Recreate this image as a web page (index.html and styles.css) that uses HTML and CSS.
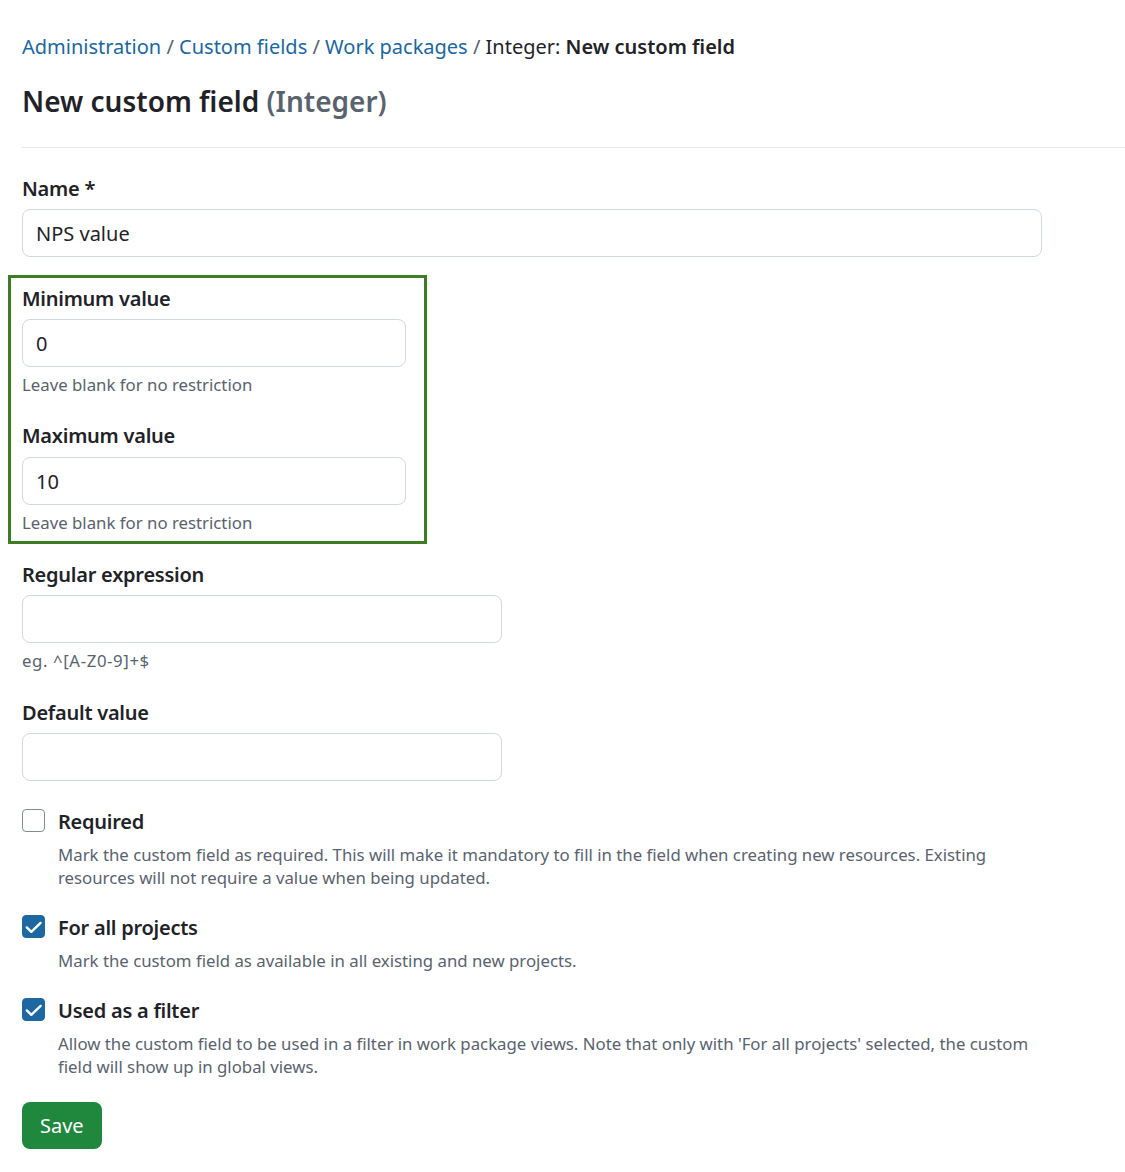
FILE: index.html
```html
<!DOCTYPE html>
<html lang="en">
<head>
<meta charset="utf-8">
<title>New custom field</title>
<link rel="stylesheet" href="styles.css">
</head>
<body>
<nav class="breadcrumb">
  <a class="crumb-link" href="#">Administration</a> <span class="sep">/</span> <a class="crumb-link" href="#">Custom fields</a> <span class="sep">/</span> <a class="crumb-link" href="#">Work packages</a> <span class="sep">/</span> <span class="current">Integer: <strong class="current-strong">New custom field</strong></span>
</nav>
<h1 class="title">New custom field <span class="title-type">(Integer)</span></h1>
<hr class="divider">
<form class="form">
  <div class="field">
    <label class="label">Name *</label>
    <input class="input" type="text" value="NPS value">
  </div>

  <div class="highlight">
    <div class="field">
      <label class="label">Minimum value</label>
      <input class="input" type="text" value="0">
      <div class="hint">Leave blank for no restriction</div>
    </div>
    <div class="field field-spaced">
      <label class="label label-loose">Maximum value</label>
      <input class="input" type="text" value="10">
      <div class="hint">Leave blank for no restriction</div>
    </div>
  </div>

  <div class="field field-after-box">
    <label class="label">Regular expression</label>
    <input class="input input-medium" type="text" value="">
    <div class="hint hint-code">eg. ^[A-Z0-9]+$</div>
  </div>

  <div class="field field-spaced-lg">
    <label class="label">Default value</label>
    <input class="input input-medium" type="text" value="">
  </div>

  <div class="check-group check-first">
    <div class="check-row">
      <span class="checkbox"></span>
      <span class="check-label">Required</span>
    </div>
    <div class="check-desc">Mark the custom field as required. This will make it mandatory to fill in the field when creating new resources. Existing resources will not require a value when being updated.</div>
  </div>

  <div class="check-group">
    <div class="check-row">
      <span class="checkbox checked"><svg class="check-icon" viewBox="0 0 23 23" width="23" height="23"><path d="M4.8 12.4L9.3 16.8L18.6 7.9" fill="none" stroke="#ffffff" stroke-width="2.4" stroke-linecap="round" stroke-linejoin="round"/></svg></span>
      <span class="check-label">For all projects</span>
    </div>
    <div class="check-desc">Mark the custom field as available in all existing and new projects.</div>
  </div>

  <div class="check-group">
    <div class="check-row">
      <span class="checkbox checked"><svg class="check-icon" viewBox="0 0 23 23" width="23" height="23"><path d="M4.8 12.4L9.3 16.8L18.6 7.9" fill="none" stroke="#ffffff" stroke-width="2.4" stroke-linecap="round" stroke-linejoin="round"/></svg></span>
      <span class="check-label">Used as a filter</span>
    </div>
    <div class="check-desc">Allow the custom field to be used in a filter in work package views. Note that only with 'For all projects' selected, the custom field will show up in global views.</div>
  </div>

  <button class="save" type="button">Save</button>
</form>
</body>
</html>
```

FILE: styles.css
```css
* {
  box-sizing: border-box;
}

html, body {
  background: #ffffff;
}

body {
  margin: 0;
  padding: 32px 0 0 22px;
  font-family: "Noto Sans", "Open Sans", sans-serif;
  color: #1f2328;
}

.breadcrumb {
  font-size: 20px;
  line-height: 30px;
  height: 30px;
  white-space: nowrap;
}

.crumb-link {
  color: #1a67a3;
  text-decoration: none;
}

.sep {
  color: #59636e;
}

.current {
  color: #1f2328;
}

.current-strong {
  font-weight: 600;
}

.title {
  margin: 21px 0 0;
  font-size: 28px;
  line-height: 36px;
  font-weight: 600;
}

.title-type {
  color: #59636e;
}

.divider {
  margin: 28px 0 0;
  border: 0;
  border-top: 1px solid #e3e6ea;
  height: 0;
}

.form {
  max-width: 1020px;
  margin-top: 25px;
}

.field {
  display: block;
}

.field-spaced {
  margin-top: 23px;
}

.field-spaced-lg {
  margin-top: 24px;
}

.field-after-box {
  margin-top: 15px;
}

.label {
  display: block;
  padding-top: 1px;
  font-size: 20px;
  line-height: 30px;
  font-weight: 600;
  letter-spacing: -0.25px;
  margin-bottom: 5px;
}

.label-loose {
  margin-bottom: 6px;
}

.input {
  display: block;
  width: 100%;
  height: 48px;
  margin: 0;
  padding: 0 13px;
  border: 1px solid #d1d9e0;
  border-radius: 8px;
  background: #ffffff;
  font-family: inherit;
  font-size: 20px;
  color: #1f2328;
  outline: none;
}

.input-medium {
  width: 480px;
}

.hint {
  margin-top: 6px;
  font-size: 16.8px;
  line-height: 24px;
  color: #59636e;
}

.hint-code {
  letter-spacing: 0.6px;
}

.highlight {
  width: 419px;
  margin: 18px 0 0 -14px;
  padding: 5px 18px 6px 11px;
  border: 3px solid #3c7d23;
}

.check-group {
  margin-top: 24px;
}

.check-first {
  margin-top: 26px;
}

.check-row {
  display: flex;
  align-items: flex-start;
  gap: 13px;
}

.checkbox {
  flex: none;
  width: 23px;
  height: 23px;
  margin-top: 1.5px;
  border: 1px solid #818b98;
  border-radius: 4px;
  background: #ffffff;
  display: flex;
  align-items: center;
  justify-content: center;
  overflow: hidden;
}

.checkbox.checked {
  background: #1d67a3;
  border-color: #1d67a3;
}

.check-icon {
  display: block;
  flex: none;
}

.check-label {
  font-size: 20px;
  line-height: 30px;
  font-weight: 600;
  letter-spacing: -0.25px;
}

.check-desc {
  margin: 6px 0 0 36px;
  font-size: 16.8px;
  line-height: 23px;
  color: #59636e;
}

.save {
  display: block;
  margin-top: 24px;
  height: 47px;
  padding: 0 18px;
  border: 0;
  border-radius: 8px;
  background: #1f883d;
  color: #ffffff;
  font-family: inherit;
  font-size: 20px;
  cursor: pointer;
}
```
